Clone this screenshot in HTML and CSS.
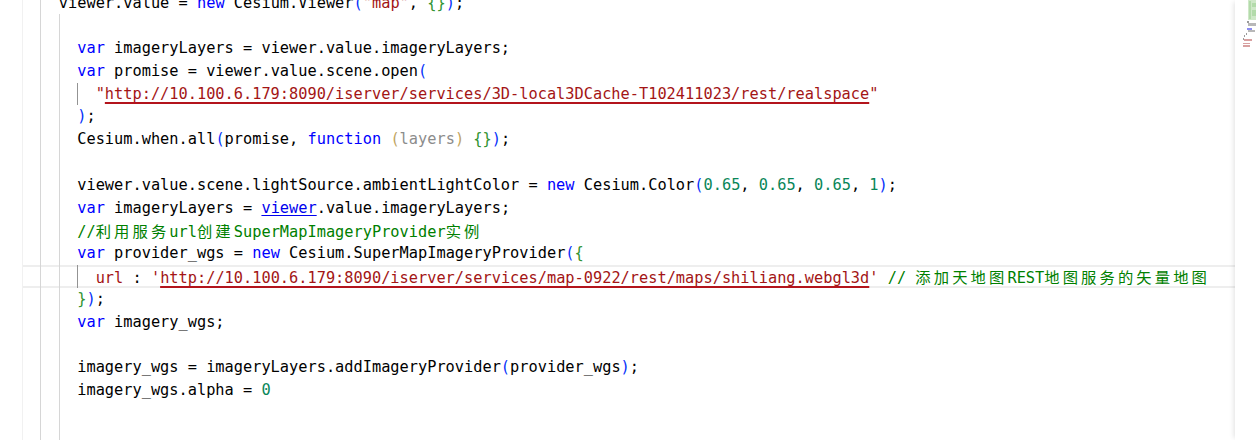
FILE: index.html
```html
<!DOCTYPE html>
<html lang="en">
<head>
<meta charset="UTF-8">
<title>Editor</title>
<link rel="stylesheet" href="styles.css">
</head>
<body>
<div class="editor">
  <div class="gutter"></div>
  <div class="code">
    <div class="ln"><span class="g g0"></span><span class="g"></span>viewer.value = <span class="kw">new</span> Cesium.Viewer<span class="b1">(</span><span class="str">"map"</span>, <span class="b2">{}</span><span class="b1">)</span>;</div>
    <div class="ln"><span class="g g0"></span><span class="g"></span><span class="g"></span></div>
    <div class="ln"><span class="g g0"></span><span class="g"></span><span class="g"></span><span class="kw">var</span> imageryLayers = viewer.value.imageryLayers;</div>
    <div class="ln"><span class="g g0"></span><span class="g"></span><span class="g"></span><span class="kw">var</span> promise = viewer.value.scene.open<span class="b1">(</span></div>
    <div class="ln"><span class="g g0"></span><span class="g"></span><span class="g"></span><span class="g ga"></span><span class="str">"<span class="err">http://10.100.6.179:8090/iserver/services/3D-local3DCache-T102411023/rest/realspace</span>"</span></div>
    <div class="ln"><span class="g g0"></span><span class="g"></span><span class="g"></span><span class="b1">)</span>;</div>
    <div class="ln"><span class="g g0"></span><span class="g"></span><span class="g"></span>Cesium.when.all<span class="b1">(</span>promise, <span class="kw">function</span> <span class="b3">(</span><span class="unused">layers</span><span class="b3">)</span> <span class="b2">{}</span><span class="b1">)</span>;</div>
    <div class="ln"><span class="g g0"></span><span class="g"></span><span class="g"></span></div>
    <div class="ln"><span class="g g0"></span><span class="g"></span><span class="g"></span>viewer.value.scene.lightSource.ambientLightColor = <span class="kw">new</span> Cesium.Color<span class="b1">(</span><span class="num">0.65</span>, <span class="num">0.65</span>, <span class="num">0.65</span>, <span class="num">1</span><span class="b1">)</span>;</div>
    <div class="ln"><span class="g g0"></span><span class="g"></span><span class="g"></span><span class="kw">var</span> imageryLayers = <span class="link">viewer</span>.value.imageryLayers;</div>
    <div class="ln"><span class="g g0"></span><span class="g"></span><span class="g"></span><span class="cm">//<span class="cjk">利用服务</span>url<span class="cjk">创建</span>SuperMapImageryProvider<span class="cjk">实例</span></span></div>
    <div class="ln"><span class="g g0"></span><span class="g"></span><span class="g"></span><span class="kw">var</span> provider_wgs = <span class="kw">new</span> Cesium.SuperMapImageryProvider<span class="b1">(</span><span class="b2">{</span></div>
    <div class="ln cur"><span class="g g0"></span><span class="g"></span><span class="g"></span><span class="g ga"></span><span class="str">url</span> : <span class="str">'<span class="err">http://10.100.6.179:8090/iserver/services/map-0922/rest/maps/shiliang.webgl3d</span>'</span> <span class="cm">// <span class="cjk">添加天地图</span>REST<span class="cjk">地图服务的矢量地图</span></span></div>
    <div class="ln"><span class="g g0"></span><span class="g"></span><span class="g"></span><span class="b2">}</span><span class="b1">)</span>;</div>
    <div class="ln"><span class="g g0"></span><span class="g"></span><span class="g"></span><span class="kw">var</span> imagery_wgs;</div>
    <div class="ln"><span class="g g0"></span><span class="g"></span><span class="g"></span></div>
    <div class="ln"><span class="g g0"></span><span class="g"></span><span class="g"></span>imagery_wgs = imageryLayers.addImageryProvider<span class="b1">(</span>provider_wgs<span class="b1">)</span>;</div>
    <div class="ln"><span class="g g0"></span><span class="g"></span><span class="g"></span>imagery_wgs.alpha = <span class="num">0</span></div>
    <div class="ln"><span class="g g0"></span><span class="g"></span><span class="g"></span></div>
    <div class="ln"><span class="g g0"></span><span class="g"></span><span class="g"></span></div>
    <div class="ln"><span class="g g0"></span><span class="g"></span><span class="g"></span></div>
  </div>
  <!-- minimap -->
  <div class="minimap">
    <svg width="21" height="440" viewBox="0 0 21 440">
      <rect x="13" y="0" width="8" height="20" fill="#cfe8c8"/>
      <rect x="14" y="1" width="2" height="18" fill="#b3dbaa"/>
      <rect x="17" y="3" width="4" height="4" fill="#b3dbaa"/>
      <rect x="17" y="10" width="4" height="6" fill="#b3dbaa"/>
      <rect x="12" y="21" width="2" height="2" fill="#9a9a9a"/>
      <rect x="13" y="23" width="8" height="3" fill="#b8b8b8"/>
      <rect x="12" y="28" width="5" height="2" fill="#8c8cf0"/>
      <rect x="13" y="30" width="7" height="2" fill="#b8b8b8"/>
      <rect x="11" y="33" width="1" height="2" fill="#9a9a9a"/>
      <rect x="9" y="35" width="1" height="2" fill="#9a9a9a"/>
      <rect x="8" y="38" width="1" height="2" fill="#9a9a9a"/>
      <rect x="9" y="39" width="8" height="2" fill="#d8a0a0"/>
      <rect x="8" y="43" width="7" height="1" fill="#d8a0a0"/>
      <rect x="8" y="45" width="7" height="2" fill="#d8a0a0"/>
    </svg>
  </div>
</div>
</body>
</html>
```
FILE: styles.css
```css
/* Editor frame */
body {
  margin: 0;
  padding: 0;
  background-color: #fff;
}

.editor {
  display: flex;
  height: 440px;
  overflow: hidden;
  background-color: #fff;
}

.gutter {
  width: 22px;
  flex-shrink: 0;
}

.code {
  flex: 1;
  margin-top: -8.5px;
  font-family: "DejaVu Sans Mono", "Noto Sans CJK SC", monospace;
  font-size: 15.3px;
  color: #000;
}

.ln {
  height: 22.8px;
  line-height: 22.8px;
  white-space: pre;
}

/* current line */
.cur {
  box-shadow: inset 0 2px #eeeeee, inset 0 -2px #eeeeee;
}

/* indent guides */
.g {
  display: inline-block;
  width: 2ch;
  height: 22.8px;
  vertical-align: top;
  box-shadow: inset 1px 0 #d6d6d6;
}

.g0 {
  box-shadow: inset 1px 0 #f1f1f1;
}

.ga {
  box-shadow: inset 1px 0 #939393;
}

/* tokens */
.kw {
  color: #0000ff;
}

.str {
  color: #a31515;
}

.num {
  color: #098658;
}

.cm {
  color: #008000;
}

.cjk {
  font-family: "Noto Sans CJK SC", sans-serif;
  letter-spacing: 3.12px;
}

.b1 {
  color: #0431fa;
}

.b2 {
  color: #319331;
}

.b3 {
  color: #bfa462;
}

.unused {
  color: #8c8c8c;
}

.link {
  color: #0000ee;
  text-decoration: underline;
  text-underline-offset: 2px;
}

.err {
  text-decoration: underline;
  text-decoration-color: #b3141c;
  text-decoration-thickness: 1.5px;
  text-underline-offset: 3px;
  text-decoration-skip-ink: none;
}

/* minimap */
.minimap {
  width: 21px;
  flex-shrink: 0;
  background-color: #fff;
  box-shadow: -3px 0 5px -2px rgba(0, 0, 0, 0.12);
}

.minimap svg {
  display: block;
}
```
